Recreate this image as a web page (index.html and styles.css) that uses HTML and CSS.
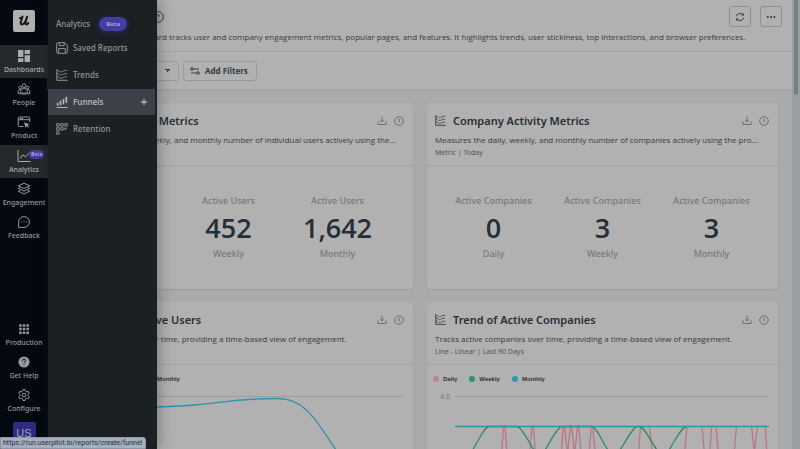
FILE: index.html
```html
<!DOCTYPE html>
<html lang="en">
<head>
<meta charset="utf-8">
<title>Dashboards</title>
<link rel="stylesheet" href="styles.css">
</head>
<body>
<svg class="defs" aria-hidden="true">
  <defs>
    <symbol id="trend" viewBox="0 0 12 12">
      <path stroke-width="1" d="M.8.4v10.900H11.600"/>
      <path stroke-width=".8" d="M1 1c1.600 0 2.400 2 4 2s2.400-2 6-1.600M1 4.200c1.600 0 2.400 2 4 2s2.400-2 6-1.600M1 7.400c1.600 0 2.400 2 4 2s2.400-2 6-1.600"/>
    </symbol>
    <symbol id="download" viewBox="0 0 10 10">
      <path d="M1 5.400v3.100h8V5.400M5 .8v5M3.200 4.200L5 6l1.800-1.800"/>
    </symbol>
    <symbol id="clock" viewBox="0 0 10 10">
      <circle cx="5" cy="5" r="4.300"/><path d="M5 2.600v2.700l1.200.9"/>
    </symbol>
  </defs>
</svg>
<div class="app">
  <nav class="rail" aria-label="Main">
    <a class="logo" href="#" aria-label="Home">
      <svg viewBox="0 0 22 22"><path d="M7 8.200c1.500-.2 2.300-1 2.500-1.800M9.500 6.600C9 9 7.800 11 7.700 13c-.1 2.400 3.200 1.800 4.700-1.500l1.700-4.800-1.500 5.800c-.5 2.300 1.300 2.500 2.700.6"/></svg>
    </a>
    <div class="rail-group rail-top">
      <a class="rail-item current" href="#">
        <svg viewBox="0 0 14 14" class="solid"><path d="M1 1h5.400v7H1zM7.600 1H13v4H7.600zM7.600 6.200H13V13H7.600zM1 9.200h5.400V13H1z"/></svg>
        <span>Dashboards</span>
      </a>
      <a class="rail-item" href="#">
        <svg viewBox="0 0 14 14"><circle cx="7" cy="3.600" r="1.900"/><circle cx="3.300" cy="5.600" r="1.300"/><circle cx="10.700" cy="5.600" r="1.300"/><path d="M3.800 12V9.600c0-4 6.400-4 6.400 0V12zM3.700 11.500H1.200V9.300c0-1.300 1.300-2 2.900-1.600M10.300 11.500h2.500V9.300c0-1.300-1.300-2-2.900-1.600M5.900 12V9.800M8.100 12V9.800"/></svg>
        <span>People</span>
      </a>
      <a class="rail-item" href="#">
        <svg viewBox="0 0 14 14"><path d="M6.500 11.500H2.300c-.7 0-1-.4-1-1V3c0-.7.3-1 1-1h9.400c.7 0 1 .3 1 1v4M1.300 4.700h11.400M3 3.400h3"/><path class="fill" d="M7 7.200l5.800 2-2.300 1.100 1.500 1.700-.9.8-1.500-1.700-1 1.900z"/></svg>
        <span>Product</span>
      </a>
      <a class="rail-item current" href="#">
        <svg viewBox="0 0 14 14"><path d="M1 1v11.500h12.500M3 9.500l2.800-3.600 2.700 2L13 3.200"/></svg>
        <span>Analytics</span>
        <b class="mini-beta">Beta</b>
      </a>
      <a class="rail-item" href="#">
        <svg viewBox="0 0 14 14"><path d="M7 1.200l5.600 2.700L7 6.600 1.400 3.900zM1.400 6.400L7 9.100l5.600-2.700M1.400 6.400l1.800-.9M12.600 6.400l-1.800-.9M1.400 9.200L7 12l5.600-2.800M1.400 9.200l1.800-.9M12.600 9.200l-1.800-.9"/></svg>
        <span>Engagement</span>
      </a>
      <a class="rail-item" href="#">
        <svg viewBox="0 0 14 14"><path d="M1.600 12.400V7a5.400 5.400 0 1 1 5.400 5.400z"/><path class="dots" d="M4.600 7h.1M7 7h.1M9.400 7h.1"/></svg>
        <span>Feedback</span>
      </a>
    </div>
    <div class="rail-group rail-bottom">
      <a class="rail-item" href="#">
        <svg viewBox="0 0 14 14" class="solid"><path d="M2.200 2.200h2.500v2.500H2.200zM5.800 2.200h2.500v2.500H5.800zM9.400 2.200h2.500v2.500H9.400zM2.200 5.800h2.500v2.500H2.200zM5.800 5.800h2.500v2.500H5.800zM9.400 5.800h2.500v2.500H9.400zM2.200 9.400h2.500v2.500H2.200zM5.800 9.400h2.500v2.500H5.800zM9.400 9.400h2.500v2.500H9.400z"/></svg>
        <span>Production</span>
      </a>
      <a class="rail-item" href="#">
        <svg viewBox="0 0 14 14"><circle class="fill" cx="7" cy="7" r="5.600"/><path class="cut" d="M5.400 5.700c0-2 3.200-2 3.200 0 0 1.100-1.600 1.100-1.600 2.300M7 9.300v.9"/></svg>
        <span>Get Help</span>
      </a>
      <a class="rail-item" href="#">
        <svg viewBox="0 0 14 14"><path d="M6 1.500h2l.4 1.700 1.200.7 1.700-.5 1 1.700L11 6.300v1.400l1.300 1.200-1 1.700-1.700-.5-1.200.7-.4 1.700H6l-.4-1.700-1.200-.7-1.700.5-1-1.700L3 7.700V6.300L1.700 5.100l1-1.700 1.700.5 1.200-.7z"/><circle cx="7" cy="7" r="1.800"/></svg>
        <span>Configure</span>
      </a>
    </div>
    <button class="avatar" type="button">US</button>
  </nav>

  <aside class="flyout" aria-label="Analytics">
    <h2 class="flyout-title">Analytics <b class="beta">Beta</b></h2>
    <div class="flyout-list">
      <a class="flyout-item" href="#">
        <svg viewBox="0 0 12 12"><path d="M1.500.7h7.300l2.500 2.500v7.300c0 .5-.3.800-.8.800h-9c-.5 0-.8-.3-.8-.8v-9c0-.5.3-.8.800-.8zM3.200.7v3h5v-3M2.700 11.300V6.600h6.600v4.700"/></svg>
        <span>Saved Reports</span>
      </a>
      <a class="flyout-item" href="#">
        <svg><use href="#trend"/></svg>
        <span>Trends</span>
      </a>
      <a class="flyout-item active" href="#">
        <svg viewBox="0 0 12 12"><path d="M.5 11.500h11"/><path stroke-width="1.700" d="M1.700 9.700V6.700M4.500 9.200V4.800M7.400 8.200V3M10.300 6.800V.8"/></svg>
        <span>Funnels</span>
        <svg class="plus" viewBox="0 0 8 8"><path stroke-width="1.300" d="M4 1v6M1 4h6"/></svg>
      </a>
      <a class="flyout-item" href="#">
        <svg viewBox="0 0 12 12"><path stroke-width=".9" d="M.6.600h2.500v2.500H.6zM4.700.600h2.500v2.500H4.700zM8.800.600h2.500v2.500H8.800zM.6 4.700h2.500v2.500H.6zM4.700 4.700h2.500v2.500H4.700zM.6 8.800h2.500v2.500H.6zM8.800 4.900h1.400v1.400H8.800z"/></svg>
        <span>Retention</span>
      </a>
    </div>
  </aside>

  <main class="main">
    <header class="page-head">
      <div class="head-row">
        <button class="help" type="button" aria-label="About this dashboard">
          <svg viewBox="0 0 12 12"><circle cx="6" cy="6" r="5.300"/><path d="M4.500 5c0-1.900 3-1.900 3 0 0 1-1.500 1-1.500 2.100M6 8.200v.8"/></svg>
        </button>
        <button class="square" type="button" aria-label="Refresh">
          <svg viewBox="0 0 10 10"><path d="M1.400 4.400A3.700 3.700 0 0 1 8 2.800M8.600 5.600A3.700 3.700 0 0 1 2 7.200M8.400 1.300v1.800H6.600M1.600 8.700V6.900h1.800"/></svg>
        </button>
        <button class="square" type="button" aria-label="More">
          <svg viewBox="0 0 10 10" class="more"><path d="M1.700 5h.1M5 5h.1M8.300 5h.1"/></svg>
        </button>
      </div>
      <p class="lead">The engagement dashboard tracks user and company engagement metrics, popular pages, and features. It highlights trends, user stickiness, top interactions, and browser preferences.</p>
    </header>
    <div class="toolbar">
      <select class="period" aria-label="Segment"><option></option></select>
      <button class="filter" type="button">
        <svg viewBox="0 0 10 8"><circle cx="2" cy="2" r="1.300"/><circle cx="8" cy="6" r="1.300"/><path d="M3.300 2H9M1 6h5.700"/></svg>
        Add Filters
      </button>
    </div>

    <div class="board">
      <section class="card">
        <div class="card-head">
          <div class="card-title">
            <svg class="kind"><use href="#trend"/></svg>
            <h3>User Activity Metrics</h3>
            <button type="button" aria-label="Download"><svg><use href="#download"/></svg></button>
            <button type="button" aria-label="History"><svg><use href="#clock"/></svg></button>
          </div>
          <p class="desc">Measures the daily, weekly, and monthly number of individual users actively using the…</p>
        </div>
        <div class="metrics user-metrics">
          <div class="metric"></div>
          <div class="metric"><span>Active Users</span><strong>452</strong><span>Weekly</span></div>
          <div class="metric"><span>Active Users</span><strong>1,642</strong><span>Monthly</span></div>
        </div>
      </section>

      <section class="card">
        <div class="card-head">
          <div class="card-title">
            <svg class="kind"><use href="#trend"/></svg>
            <h3>Company Activity Metrics</h3>
            <button type="button" aria-label="Download"><svg><use href="#download"/></svg></button>
            <button type="button" aria-label="History"><svg><use href="#clock"/></svg></button>
          </div>
          <p class="desc">Measures the daily, weekly, and monthly number of companies actively using the pro…</p>
          <p class="meta">Metric | Today</p>
        </div>
        <div class="metrics">
          <div class="metric"><span>Active Companies</span><strong>0</strong><span>Daily</span></div>
          <div class="metric"><span>Active Companies</span><strong>3</strong><span>Weekly</span></div>
          <div class="metric"><span>Active Companies</span><strong>3</strong><span>Monthly</span></div>
        </div>
      </section>

      <section class="card">
        <div class="card-head">
          <div class="card-title">
            <svg class="kind"><use href="#trend"/></svg>
            <h3>Trend of Active Users</h3>
            <button type="button" aria-label="Download"><svg><use href="#download"/></svg></button>
            <button type="button" aria-label="History"><svg><use href="#clock"/></svg></button>
          </div>
          <p class="desc">Tracks active users over time, providing a time-based view of engagement.</p>
        </div>
        <div class="legend"><span class="key daily">Daily</span><span class="key weekly">Weekly</span><span class="key monthly">Monthly</span></div>
        <div class="chart">
          <span class="axis"></span>
          <svg class="plot" viewBox="0 0 314 120">
            <path class="rule" d="M0 6.500H314"/>
            <path class="blue" stroke-width="1.300" d="M0 20C30 18 50 17.500 67 17C85 16.500 95 16 110 14.500C135 12 150 8.500 185 8.500C195 8.500 200 9.500 210 15C224 24 234 43 246 60L270 95"/>
          </svg>
        </div>
      </section>

      <section class="card">
        <div class="card-head">
          <div class="card-title">
            <svg class="kind"><use href="#trend"/></svg>
            <h3>Trend of Active Companies</h3>
            <button type="button" aria-label="Download"><svg><use href="#download"/></svg></button>
            <button type="button" aria-label="History"><svg><use href="#clock"/></svg></button>
          </div>
          <p class="desc">Tracks active companies over time, providing a time-based view of engagement.</p>
          <p class="meta">Line - Linear | Last 90 Days</p>
        </div>
        <div class="legend"><span class="key daily">Daily</span><span class="key weekly">Weekly</span><span class="key monthly">Monthly</span></div>
        <div class="chart">
          <span class="axis">4.0</span>
          <svg class="plot" viewBox="0 0 314 120">
            <path class="rule" d="M0 6.500H314"/>
            <path class="pink" stroke-width="1.300" d="M46 70L48.500 38Q49.300 34 50.100 38L52.500 70M74 70L76.800 38Q77.600 34 78.400 38L81 70M106 70L108.200 38Q109 34 109.800 38L112.500 64L115.200 38Q116 34 116.800 38L119.500 64L122.400 38Q123.200 34 124 38L126.500 70M133.500 70L136.200 38Q137 34 137.800 38L141 70M183 70L185.500 36.500M194.500 36.500L198 70M229 70L232 36.500M247 36.500L250 70M254 70L256.700 36.500M261 36.500L264 70M278.500 70L281.500 36.500M296.500 36.500L299.400 62L302.300 36.500M310.300 36.500L313 80"/>
            <path class="green" stroke-width="1.300" d="M8 78C14 66 20 56 24 49C28 42 30 37 34 36.500H62C67 37 73 51 79 60C83 67 87 67 90 60C96 51 102 37 107 36.500H137C142 37 147 52 153 60C157 67 161 67 165 60C171 51 178 37 182 36.500H184C190 37 196 52 202 60C206 67 210 67 214 60C220 51 226 37 232 36.500"/>
            <path class="blue" stroke-width="1.500" d="M0 36.500H314"/>
          </svg>
        </div>
      </section>
    </div>
  </main>
  <div class="scroll" aria-hidden="true"><i></i></div>
  <div class="status">https://run.userpilot.io/reports/create/funnel</div>
</div>
</body>
</html>
```
FILE: styles.css
```css
* { box-sizing: border-box; margin: 0; padding: 0; }

body {
  font-family: "Noto Sans", "Open Sans", sans-serif;
  font-size: 8px;
  color: #343b42;
  background: #aaa;
  overflow: hidden;
}

a { color: inherit; text-decoration: none; }
button { font: inherit; color: inherit; background: none; border: 0; }
svg { display: block; fill: none; stroke: currentColor; overflow: visible; }
.defs { position: absolute; width: 0; height: 0; }

.app { position: relative; display: flex; height: 100vh; overflow: hidden; }

/* icon rail */
.rail {
  flex: 0 0 48px;
  display: flex;
  flex-direction: column;
  align-items: center;
  background: #040811;
  color: #979a9d;
  overflow: hidden;
}
.logo {
  flex: none;
  width: 22px;
  height: 22px;
  margin: 10px 0 13px;
  border-radius: 2px;
  background: #b0b0b0;
  color: #15181c;
}
.logo svg { stroke-width: 2; stroke-linecap: round; stroke-linejoin: round; }
.rail-group { flex: none; display: grid; grid-auto-rows: 1fr; width: 100%; }
.rail-top { height: 200px; }
.rail-bottom { height: 100px; margin-top: auto; }
.rail-item {
  position: relative;
  display: flex;
  flex-direction: column;
  align-items: center;
  justify-content: center;
  gap: 2px;
  font-size: 7px;
  line-height: 10px;
  font-weight: 500;
}
.rail-item svg { width: 14px; height: 14px; stroke-width: 1; }
.rail-item .solid, .rail-item .fill { fill: currentColor; stroke: none; }
.rail-item .cut { stroke: #040811; }
.rail-item .dots { stroke-linecap: round; }
.rail-item.current { background: #25292c; color: #a9abac; }
.mini-beta {
  position: absolute;
  top: 5px;
  left: 29px;
  padding: 0 2px;
  border-radius: 5px;
  background: #433b9d;
  color: #aaa6d0;
  font-size: 5px;
  line-height: 9px;
}
.avatar {
  flex: none;
  width: 23px;
  height: 27px;
  margin-top: 4px;
  border-radius: 2px 2px 0 0;
  background: #2e2b83;
  color: #a5a5bd;
  font: 11px/22px "Liberation Sans", sans-serif;
  display: flex;
  justify-content: center;
}

/* flyout menu */
.flyout {
  position: absolute;
  z-index: 2;
  left: 48px;
  top: 0;
  bottom: 0;
  width: 109px;
  padding-top: 17px;
  background: #1b2023;
  color: #939799;
  box-shadow: 2px 0 14px rgba(20, 30, 40, .35);
}
.flyout-title {
  display: flex;
  align-items: center;
  gap: 9px;
  padding-left: 8px;
  margin-bottom: 4px;
  font-size: 8px;
  line-height: 14px;
  font-weight: 500;
}
.beta {
  padding: 0 7px;
  border-radius: 7px;
  background: #443ba3;
  color: #aaa6d0;
  font-size: 6px;
  box-shadow: 0 1px 6px rgba(68, 59, 163, .4);
}
.flyout-list { display: grid; grid-auto-rows: 1fr; height: 107px; margin-right: 2px; }
.flyout-item {
  display: flex;
  align-items: center;
  gap: 5px;
  padding-left: 8px;
  font-size: 8px;
  line-height: 12px;
  font-weight: 500;
}
.flyout-item svg { width: 12px; height: 12px; }
.flyout-item.active { background: #3c4149; color: #b2b4b6; font-weight: 600; }
.flyout-item .plus { width: 8px; height: 8px; margin: 0 7px 0 auto; }

/* page */
.main { flex: 1; min-width: 0; background: #aaa; }
.page-head { height: 52px; padding: 6px 10px 0 14px; background: #b1b1b1; border-bottom: 1px solid #a1a3a4; }
.head-row { display: flex; align-items: center; gap: 9px; }
.help { margin: 0 auto 0 90px; }
.help svg { width: 12px; height: 12px; }
.square {
  display: grid;
  place-items: center;
  width: 22px;
  height: 21px;
  border: 1px solid #8d9091;
  border-radius: 3px;
}
.square svg { width: 10px; height: 10px; }
.square .more { stroke-width: 2; stroke-linecap: round; }
.lead, .desc { font-family: "Open Sans", "Noto Sans", sans-serif; line-height: 12px; white-space: nowrap; }
.lead { margin-top: 4px; }
.toolbar {
  display: flex;
  align-items: center;
  gap: 4px;
  height: 38px;
  padding-left: 14px;
  background: #b1b1b1;
  border-bottom: 1px solid #a1a3a4;
  box-shadow: 0 1px 1px #a3a3a3;
}
.period {
  appearance: none;
  width: 117px;
  height: 20px;
  border: 1px solid #999c9d;
  border-radius: 3px;
  background: linear-gradient(to bottom left, #343b42 50%, transparent 50%) right 10px center / 3px 3px no-repeat,
              linear-gradient(to bottom right, #343b42 50%, transparent 50%) right 7px center / 3px 3px no-repeat;
}
.filter {
  display: flex;
  align-items: center;
  gap: 5px;
  height: 20px;
  padding: 0 8px 0 6px;
  border: 1px solid #999c9d;
  border-radius: 3px;
  font-family: "Open Sans", "Noto Sans", sans-serif;
  font-weight: 700;
}
.filter svg { width: 10px; height: 8px; }

/* cards */
.board { display: grid; grid-template-columns: 1fr 1fr; gap: 13px 14px; padding: 13px 14px; }
.card { min-width: 0; border-radius: 4px; background: #b1b1b1; box-shadow: 0 1px 2px #9c9c9c; overflow: hidden; }
.card-head { height: 63px; padding: 10px 9px 0 8px; border-bottom: 1px solid #a2a4a5; }
.card-title { display: flex; align-items: center; gap: 7px; height: 15px; }
.card-title .kind { flex: none; width: 11px; height: 11px; }
.card-title h3 { flex: 1; font-size: 11px; line-height: 15px; font-weight: 600; color: #262e36; }
.card-title button { color: #6b7074; }
.card-title button svg { width: 10px; height: 10px; }
.desc { margin-top: 6px; }
.meta { margin-top: 2px; font-size: 7px; line-height: 10px; color: #50575c; }
.metrics { display: grid; grid-template-columns: repeat(3, 1fr); height: 123px; padding: 28px 12px 0; }
.user-metrics { padding: 28px 21px 0 3px; }
.metric { display: flex; flex-direction: column; align-items: center; color: #74797d; font-size: 9px; line-height: 14px; font-weight: 500; }
.metric strong { font-family: "Open Sans", "Noto Sans", sans-serif; font-size: 27px; line-height: 39px; font-weight: 600; color: #262e36; }

.legend { display: flex; gap: 12px; padding: 10px 6px 0; font: bold 6px/8px "Liberation Sans", sans-serif; }
.key { display: flex; align-items: center; gap: 4px; color: #2d343a; }
.key::before { content: ""; width: 6px; height: 6px; border-radius: 50%; background: currentColor; }
.key.daily::before { background: #c08490; }
.key.weekly::before { background: #319263; }
.key.monthly::before { background: #3097b0; }
.chart { display: flex; gap: 5px; padding: 7px 9px 0 13px; }
.axis { flex: 0 0 10px; font-size: 7px; line-height: 14px; color: #73787b; }
.plot { flex: 1; min-width: 0; }
.rule { stroke: #9b9d9e; }
.pink { stroke: #bd7585; }
.green { stroke: #2f8b62; }
.blue { stroke: #2f93ad; }

.scroll { flex: 0 0 8px; padding: 0 2px; background: #999fa3; }
.scroll i { display: block; height: 95px; border-radius: 0 0 2px 2px; background: #788084; }

.status {
  position: absolute;
  z-index: 3;
  left: 0;
  bottom: 0;
  padding: 0 3px 0 2px;
  border: 1px solid #8d97a8;
  border-radius: 0 3px 0 0;
  background: #a4afc0;
  color: #262e3a;
  font: 7px/10px Roboto, "Liberation Sans", sans-serif;
  white-space: nowrap;
}
```
